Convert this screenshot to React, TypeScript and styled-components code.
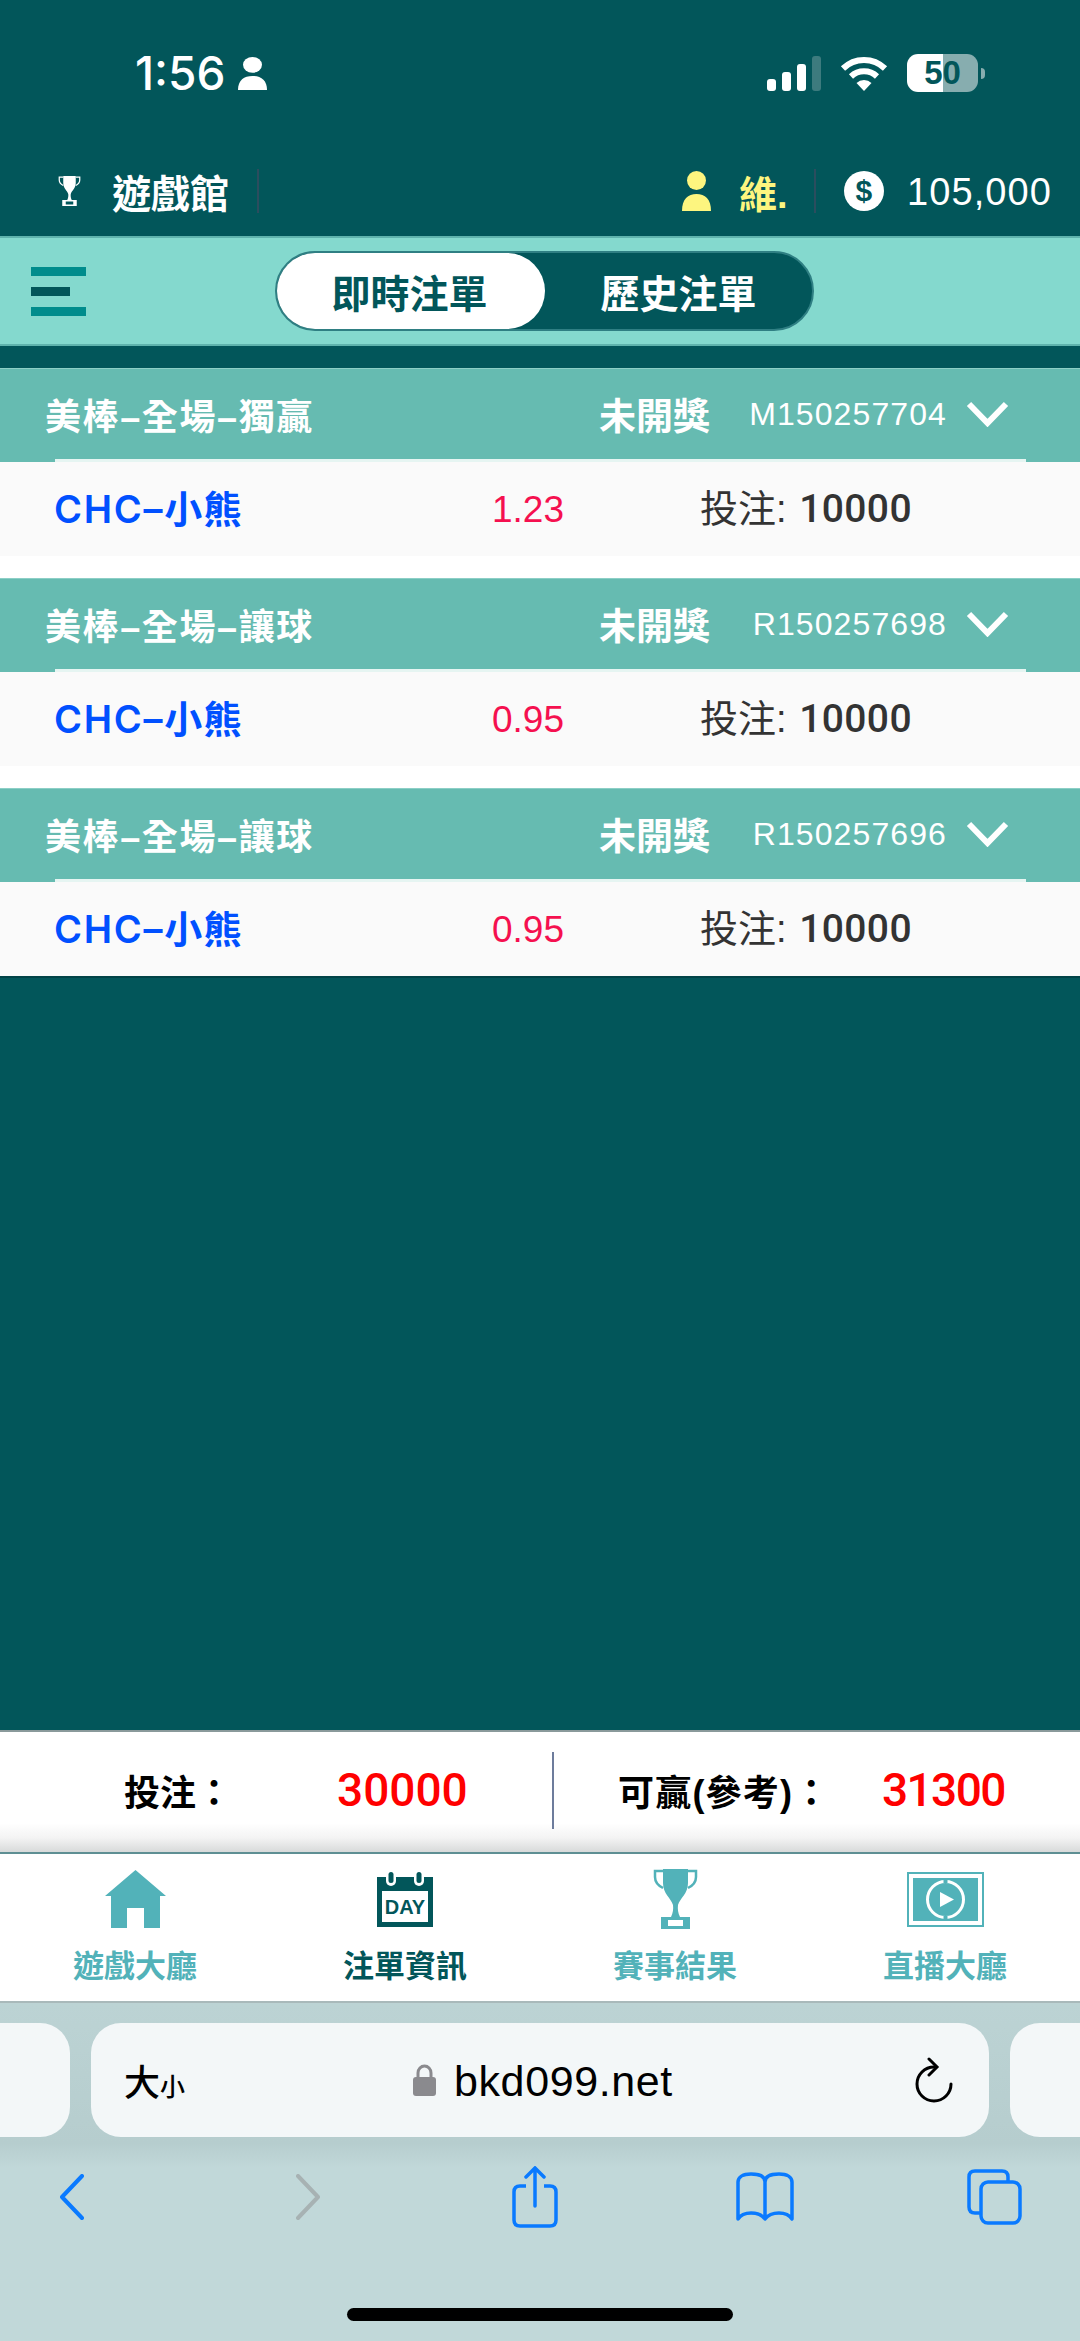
import React from 'react'
import styled, { createGlobalStyle } from 'styled-components'

const GlobalStyle = createGlobalStyle`
  html, body {
    margin: 0;
    padding: 0;
    background: #02565a;
  }
  * {
    box-sizing: border-box;
  }
  body {
    font-family: "Liberation Sans", "Noto Sans CJK TC", sans-serif;
  }
`

const DARK = '#02565a'
const TEAL = '#52b2b9'
const BLUE = '#0a7aff'

const Page = styled.div`
  width: 1080px;
  height: 2341px;
  display: flex;
  flex-direction: column;
  background: ${DARK};
  overflow: hidden;
`

const StatusBar = styled.div`
  height: 146px;
  flex: none;
  display: flex;
  align-items: center;
  padding: 0 95px 0 135px;
  color: #fff;
`

const Clock = styled.div`
  font-size: 46px;
  line-height: 1;
  width: 103px;
  font-family: "Inter", "Liberation Sans", sans-serif;
  font-weight: 500;
`

const Spacer = styled.div`
  flex: 1;
`

const Signal = styled.div`
  display: flex;
  align-items: flex-end;
  gap: 6px;
  height: 35px;
  margin-right: 19px;
`

const SignalBar = styled.div<{ $h: number; $dim?: boolean }>`
  width: 9px;
  height: ${(p) => p.$h}px;
  border-radius: 3px;
  background: ${(p) => (p.$dim ? '#3d7b7e' : '#fff')};
`

const Battery = styled.div`
  width: 71px;
  height: 38px;
  margin-left: 19px;
  border-radius: 11px;
  background: linear-gradient(90deg, #fff 0 50%, #87adaf 50% 100%);
  color: ${DARK};
  font-size: 33px;
  font-weight: 700;
  line-height: 38px;
  text-align: center;
`

const BatteryNub = styled.div`
  width: 4px;
  height: 11px;
  margin-left: 3px;
  border-radius: 0 4px 4px 0;
  background: #87adaf;
`

const AccountRow = styled.div`
  height: 90px;
  flex: none;
  display: flex;
  align-items: center;
  padding: 0 28px 0 58px;
  color: #fff;
  font-size: 38px;
`

const VenueName = styled.div`
  margin-left: 31px;
  width: 145px;
  font-size: 39px;
  font-weight: 700;
`

const RowDivider = styled.div`
  width: 2px;
  height: 44px;
  background: #2b4d5e;
`

const UserName = styled.div`
  margin-left: 28px;
  width: 75px;
  color: #fdf57f;
  font-weight: 700;
`

const Coin = styled.div`
  width: 40px;
  height: 40px;
  margin-left: 28px;
  border-radius: 50%;
  background: #fff;
  color: ${DARK};
  font-size: 30px;
  font-weight: 700;
  line-height: 40px;
  text-align: center;
`

const Balance = styled.div`
  margin-left: 23px;
  padding-top: 3px;
  font-size: 38px;
  letter-spacing: 1.1px;
`

const TabBar = styled.div`
  height: 110px;
  flex: none;
  display: flex;
  align-items: center;
  padding-left: 31px;
  background: #84d9ce;
  border-top: 2px solid #5fb3ad;
  border-bottom: 2px solid #5fb3ad;
`

const Burger = styled.div`
  width: 55px;
  display: flex;
  flex-direction: column;
  gap: 11px;
`

const BurgerBar = styled.div<{ $short?: boolean }>`
  height: 9px;
  width: ${(p) => (p.$short ? '39px' : '55px')};
  background: ${(p) => (p.$short ? DARK : '#008c8c')};
`

const Toggle = styled.div`
  width: 539px;
  height: 80px;
  margin-left: 189px;
  display: flex;
  border: 2px solid #2f7f83;
  border-radius: 40px;
  background: ${DARK};
`

const ToggleItem = styled.div<{ $on?: boolean }>`
  height: 76px;
  display: flex;
  align-items: center;
  justify-content: center;
  width: ${(p) => (p.$on ? '268px' : '267px')};
  padding-right: ${(p) => (p.$on ? '3px' : '0')};
  border-radius: 38px;
  background: ${(p) => (p.$on ? '#fff' : 'transparent')};
  color: ${(p) => (p.$on ? DARK : '#fff')};
  font-size: 39px;
  font-weight: 700;
`

const List = styled.div`
  flex: 1;
  padding-top: 22px;
`

const Card = styled.div`
  background: #fff;
  padding-bottom: 22px;

  &:last-child {
    padding-bottom: 0;
    border-bottom: 2px solid #024347;
  }
`

const CardHead = styled.div`
  height: 94px;
  padding: 0 71px 3px 45px;
  display: flex;
  align-items: center;
  position: relative;
  background: #66bbb1;
  border-top: 1px solid #8ccfc6;
  color: #fff;
  font-size: 36px;
  font-weight: 700;

  &::after {
    content: '';
    position: absolute;
    left: 55px;
    right: 54px;
    bottom: 0;
    height: 3px;
    background: #e6f5f2;
  }
`

const MarketName = styled.div`
  flex: 1;
  letter-spacing: 1.6px;
  white-space: nowrap;
`

const BetState = styled.div`
  width: 150px;
  font-size: 37px;
`

const BetId = styled.div`
  width: 198px;
  font-size: 32px;
  font-weight: 400;
  letter-spacing: 1.1px;
  text-align: right;
  white-space: nowrap;
`

const Chevron = styled.svg`
  width: 43px;
  height: 26px;
  margin-left: 19px;
  flex: none;
`

const CardRow = styled.div`
  height: 94px;
  padding-left: 54px;
  display: grid;
  grid-template-columns: 438px 208px 1fr;
  align-items: center;
  background: #fafafa;
  font-size: 38px;
  line-height: 46px;
`

const TeamName = styled.div`
  color: #0050ff;
  font-family: "Inter", "Noto Sans CJK TC", sans-serif;
  font-weight: 600;
  font-size: 38px;
  letter-spacing: 1.7px;
  white-space: nowrap;
`

const Odds = styled.div`
  padding-top: 2px;
  color: #f5104f;
  font-size: 37px;
`

const Stake = styled.div`
  color: #333;
  white-space: nowrap;
`

const StakeAmount = styled.span`
  margin-left: 2px;
  font-family: "Roboto", "Liberation Sans", sans-serif;
  font-weight: 500;
  font-size: 39px;
  letter-spacing: 0.4px;
`

const Summary = styled.div`
  height: 122px;
  flex: none;
  display: flex;
  align-items: center;
  padding-bottom: 4px;
  background: linear-gradient(180deg, #fff 0, #fff 76%, #f4f4f4 88%, #d8dada 100%);
  border-top: 2px solid #8a9a9b;
`

const SummaryPart = styled.div<{ $left?: boolean }>`
  display: flex;
  align-items: center;
  height: 77px;
  width: ${(p) => (p.$left ? '552px' : '526px')};
  padding-left: ${(p) => (p.$left ? '124px' : '64px')};
`

const SummaryLabel = styled.div<{ $w: number; $wide?: boolean }>`
  width: ${(p) => p.$w}px;
  color: #000;
  font-size: 36px;
  font-weight: 700;
  letter-spacing: ${(p) => (p.$wide ? '1.2px' : '0')};
  white-space: nowrap;
`

const SummaryValue = styled.div<{ $tight?: boolean }>`
  color: #f00;
  font-family: "Roboto", "Liberation Sans", sans-serif;
  font-size: 46px;
  font-weight: 500;
  letter-spacing: ${(p) => (p.$tight ? '-1.6px' : '0')};
`

const SummaryDivider = styled.div`
  width: 2px;
  height: 77px;
  background: #6d7c9c;
  flex: none;
`

const Nav = styled.div`
  height: 151px;
  flex: none;
  display: grid;
  grid-template-columns: repeat(4, 270px);
  background: #fff;
  border-top: 2px solid #5e8f93;
  border-bottom: 2px solid #a9b9ba;
`

const NavItem = styled.div<{ $on?: boolean }>`
  height: 148px;
  padding-top: 15px;
  display: flex;
  flex-direction: column;
  align-items: center;
  color: ${(p) => (p.$on ? DARK : TEAL)};
  font-size: 31px;
  font-weight: 700;
`

const NavIcon = styled.div`
  height: 60px;
  display: flex;
  align-items: center;
  margin-bottom: 12px;
`

const Safari = styled.div`
  height: 338px;
  flex: none;
  background: linear-gradient(180deg, #bcd3d4 0, #b6cdce 140px, #c1d8d9 165px, #c1d8d9 100%);
  padding-top: 20px;
  display: flex;
  flex-direction: column;
  align-items: center;
`

const UrlRow = styled.div`
  width: 100%;
  display: flex;
  gap: 21px;
`

const SidePill = styled.div<{ $side: 'left' | 'right' }>`
  width: 70px;
  height: 114px;
  background: #f3f7f8;
  border-radius: ${(p) => (p.$side === 'left' ? '0 30px 30px 0' : '30px 0 0 30px')};
`

const UrlPill = styled.div`
  width: 898px;
  height: 114px;
  flex: none;
  padding: 0 36px 0 33px;
  display: flex;
  align-items: center;
  border-radius: 30px;
  background: #f3f7f8;
  color: #000;
`

const TextSize = styled.div`
  width: 289px;
  font-size: 36px;
  font-weight: 500;
  white-space: nowrap;

  small {
    font-size: 25px;
  }
`

const Domain = styled.div`
  margin-left: 18px;
  padding-top: 2px;
  font-size: 43px;
  letter-spacing: 0.6px;
`

const Tools = styled.div`
  width: 100%;
  height: 64px;
  margin-top: 30px;
  padding-left: 60px;
  display: flex;
  align-items: center;
`

const ToolSlot = styled.div<{ $w: number }>`
  width: ${(p) => p.$w}px;
  flex: none;
`

const HomeBar = styled.div`
  width: 386px;
  height: 13px;
  margin-top: 77px;
  border-radius: 7px;
  background: #000;
`

const Person = ({ color, w, h }: { color: string; w: number; h: number }) => (
  <svg width={w} height={h} viewBox="0 0 29 40" preserveAspectRatio="none" style={{ flex: 'none' }}>
    <circle cx="14.5" cy="9.5" r="9.5" fill={color} />
    <path d="M0 40C0 28 6 23 14.5 23S29 28 29 40Z" fill={color} />
  </svg>
)

const Trophy = ({ color, w, h }: { color: string; w: number; h: number }) => (
  <svg width={w} height={h} viewBox="0 0 45 60">
    <path d="M10 2H2V8C2 14 6 17 10 19M35 2H43V8C43 14 39 17 35 19" fill="none" stroke={color} strokeWidth="2.5" />
    <path d="M10 0H35V14C35 25 27 29 25 36C24.5 40 25 44 27 48H18C20 44 20.5 40 20 36C18 29 10 25 10 14Z" fill={color} />
    <path fillRule="evenodd" d="M8 48H37V60H8ZM15 51V57H30V51Z" fill={color} />
  </svg>
)

const House = () => (
  <svg width="61" height="58" viewBox="0 0 61 58">
    <path d="M30.5 0L61 26H55V58H39V38H22V58H6V26H0Z" fill={TEAL} />
  </svg>
)

const CalendarDay = () => (
  <svg width="56" height="55" viewBox="0 0 56 55">
    <rect y="5" width="56" height="50" fill={DARK} />
    <rect x="5" y="19" width="46" height="31" fill="#fff" />
    <rect x="9" y="0" width="10" height="14" rx="5" fill="#fff" />
    <rect x="37" y="0" width="10" height="14" rx="5" fill="#fff" />
    <rect x="11.5" y="0" width="5" height="11" rx="2.5" fill={DARK} />
    <rect x="39.5" y="0" width="5" height="11" rx="2.5" fill={DARK} />
    <text x="28" y="42" textAnchor="middle" fontSize="20" fontFamily="Liberation Sans, sans-serif" fill={DARK}>DAY</text>
  </svg>
)

const LiveScreen = () => (
  <svg width="77" height="55" viewBox="0 0 77 55">
    <rect x="1" y="1" width="75" height="53" fill="none" stroke={TEAL} strokeWidth="2" />
    <rect x="6" y="6" width="65" height="43" fill={TEAL} />
    <circle cx="38.5" cy="27.5" r="18" fill="none" stroke="#fff" strokeWidth="3" />
    <rect x="36.5" y="6" width="4" height="5" fill={TEAL} />
    <rect x="36.5" y="44" width="4" height="5" fill={TEAL} />
    <path d="M33 20L47 27.5L33 35Z" fill="#fff" />
  </svg>
)

const Lock = () => (
  <svg width="23" height="32" viewBox="0 0 23 32" style={{ flex: 'none' }}>
    <path d="M5 15V9C5 5 8 2 11.5 2S18 5 18 9V15" fill="none" stroke="#8a8a8e" strokeWidth="3" />
    <rect y="13" width="23" height="19" rx="3" fill="#8a8a8e" />
  </svg>
)

const markets = [
  { title: '美棒–全場–獨贏', id: 'M150257704', odds: '1.23' },
  { title: '美棒–全場–讓球', id: 'R150257698', odds: '0.95' },
  { title: '美棒–全場–讓球', id: 'R150257696', odds: '0.95' },
]

const App: React.FC = () => {
  return (
    <Page>
      <GlobalStyle />
      <StatusBar>
        <Clock>1:56</Clock>
        <Person color="#fff" w={29} h={33} />
        <Spacer />
        <Signal>
          <SignalBar $h={12} />
          <SignalBar $h={19} />
          <SignalBar $h={27} />
          <SignalBar $h={35} $dim />
        </Signal>
        <svg width="48" height="35" viewBox="0 0 48 35" style={{ flex: 'none' }}>
          <path d="M3 12.5A30 30 0 0 1 45 12.5" fill="none" stroke="#fff" strokeWidth="6" />
          <path d="M11 20.5A19 19 0 0 1 37 20.5" fill="none" stroke="#fff" strokeWidth="6" />
          <path d="M16.5 27A11 11 0 0 1 31.5 27L24 35Z" fill="#fff" />
        </svg>
        <Battery>50</Battery>
        <BatteryNub />
      </StatusBar>

      <AccountRow>
        <Trophy color="#fff" w={23} h={30} />
        <VenueName>遊戲館</VenueName>
        <RowDivider />
        <Spacer />
        <Person color="#fdf57f" w={29} h={40} />
        <UserName>維.</UserName>
        <RowDivider />
        <Coin>$</Coin>
        <Balance>105,000</Balance>
      </AccountRow>

      <TabBar>
        <Burger>
          <BurgerBar />
          <BurgerBar $short />
          <BurgerBar />
        </Burger>
        <Toggle>
          <ToggleItem $on>即時注單</ToggleItem>
          <ToggleItem>歷史注單</ToggleItem>
        </Toggle>
      </TabBar>

      <List>
        {markets.map((m) => (
          <Card key={m.id}>
            <CardHead>
              <MarketName>{m.title}</MarketName>
              <BetState>未開獎</BetState>
              <BetId>{m.id}</BetId>
              <Chevron viewBox="0 0 43 26">
                <path d="M3 3L21.5 22L40 3" fill="none" stroke="#fff" strokeWidth="6" />
              </Chevron>
            </CardHead>
            <CardRow>
              <TeamName>CHC–小熊</TeamName>
              <Odds>{m.odds}</Odds>
              <Stake>投注: <StakeAmount>10000</StakeAmount></Stake>
            </CardRow>
          </Card>
        ))}
      </List>

      <Summary>
        <SummaryPart $left>
          <SummaryLabel $w={213}>投注：</SummaryLabel>
          <SummaryValue>30000</SummaryValue>
        </SummaryPart>
        <SummaryDivider />
        <SummaryPart>
          <SummaryLabel $w={264} $wide>可贏(參考)：</SummaryLabel>
          <SummaryValue $tight>31300</SummaryValue>
        </SummaryPart>
      </Summary>

      <Nav>
        <NavItem>
          <NavIcon><House /></NavIcon>
          遊戲大廳
        </NavItem>
        <NavItem $on>
          <NavIcon><CalendarDay /></NavIcon>
          注單資訊
        </NavItem>
        <NavItem>
          <NavIcon><Trophy color={TEAL} w={45} h={60} /></NavIcon>
          賽事結果
        </NavItem>
        <NavItem>
          <NavIcon><LiveScreen /></NavIcon>
          直播大廳
        </NavItem>
      </Nav>

      <Safari>
        <UrlRow>
          <SidePill $side="left" />
          <UrlPill>
            <TextSize>大<small>小</small></TextSize>
            <Lock />
            <Domain>bkd099.net</Domain>
            <Spacer />
            <svg width="38" height="46" viewBox="0 0 38 46" style={{ flex: 'none' }}>
              <path d="M19 10A17 17 0 1 0 36 27" fill="none" stroke="#000" strokeWidth="3" strokeLinecap="round" />
              <path d="M14 2L22 10L14 18" fill="none" stroke="#000" strokeWidth="3" strokeLinecap="round" />
            </svg>
          </UrlPill>
          <SidePill $side="right" />
        </UrlRow>
        <Tools>
          <ToolSlot $w={236}>
            <svg width="24" height="46" viewBox="0 0 24 46">
              <path d="M22 2L2 23L22 44" fill="none" stroke={BLUE} strokeWidth="4" strokeLinecap="round" strokeLinejoin="round" />
            </svg>
          </ToolSlot>
          <ToolSlot $w={216}>
            <svg width="24" height="46" viewBox="0 0 24 46">
              <path d="M2 2L22 23L2 44" fill="none" stroke="#a7b2b3" strokeWidth="4" strokeLinecap="round" strokeLinejoin="round" />
            </svg>
          </ToolSlot>
          <ToolSlot $w={223}>
            <svg width="46" height="62" viewBox="0 0 46 62">
              <path d="M14 20H8Q2 20 2 26V54Q2 60 8 60H38Q44 60 44 54V26Q44 20 38 20H32" fill="none" stroke={BLUE} strokeWidth="3.5" />
              <path d="M23 2V40M14 11L23 2L32 11" fill="none" stroke={BLUE} strokeWidth="3.5" strokeLinecap="round" />
            </svg>
          </ToolSlot>
          <ToolSlot $w={231}>
            <svg width="60" height="50" viewBox="0 0 60 50">
              <path d="M30 10C30 4 24 2 16 2C8 2 3 5 3 10V47C8 39 24 39 30 47C36 39 52 39 57 47V10C57 5 52 2 44 2C36 2 30 4 30 10V46" fill="none" stroke={BLUE} strokeWidth="3.5" strokeLinejoin="round" />
            </svg>
          </ToolSlot>
          <ToolSlot $w={56}>
            <svg width="56" height="56" viewBox="0 0 56 56">
              <rect x="15" y="13" width="39" height="41" rx="7" fill="none" stroke={BLUE} strokeWidth="3.5" />
              <path d="M42 12V8Q42 2 36 2H9Q3 2 3 8V38Q3 44 9 44H14" fill="none" stroke={BLUE} strokeWidth="3.5" />
            </svg>
          </ToolSlot>
        </Tools>
        <HomeBar />
      </Safari>
    </Page>
  )
}

export default App
